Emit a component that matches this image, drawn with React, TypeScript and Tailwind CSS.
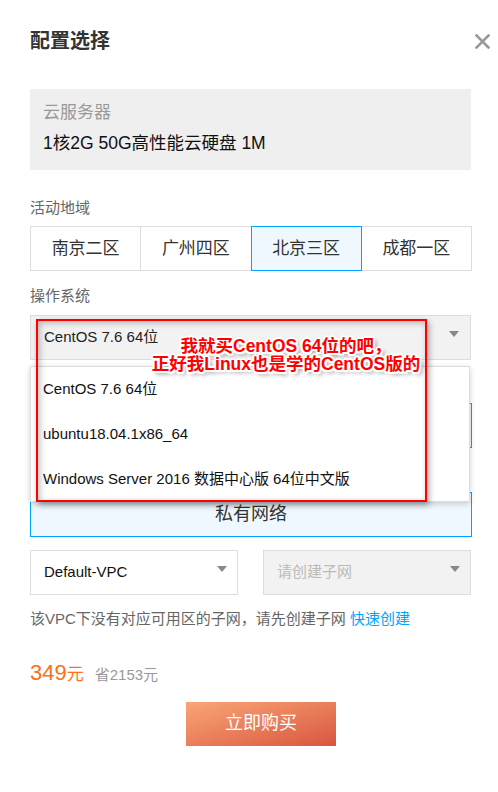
import React from "react";

const Arrow = () => (
  <svg width="10" height="6" viewBox="0 0 10 6" className="shrink-0">
    <path d="M0 0 L10 0 L5 6 Z" fill="#888" />
  </svg>
);

export default function App() {
  const tabs = ["南京二区", "广州四区", "北京三区", "成都一区"];
  return (
    <div
      className="relative w-[498px] h-[792px] bg-white overflow-hidden text-[#333]"
      style={{ fontFamily: '"Liberation Sans", "Noto Sans CJK SC", sans-serif' }}
    >
      {/* Header */}
      <div className="flex items-start justify-between pl-[30px] pr-[8px] pt-[31px]">
        <div className="text-[20px] leading-[20px] font-bold text-[#333]">配置选择</div>
        <svg width="15" height="15" viewBox="0 0 15 15" className="mt-[3px]">
          <path d="M1.5 1.5 L13.5 13.5 M13.5 1.5 L1.5 13.5" stroke="#999" strokeWidth="2.6" strokeLinecap="square" />
        </svg>
      </div>

      <div className="px-[30px] w-[471px] box-content">
        <div className="w-[441px]">
          {/* Server box */}
          <div className="mt-[38px] h-[81px] bg-[#efefef] pl-[13px] pt-[15px]">
            <div className="text-[17px] leading-[17px] text-[#999]">云服务器</div>
            <div className="mt-[14px] text-[17.5px] leading-[17px] text-[#111]">1核2G 50G高性能云硬盘 1M</div>
          </div>

          {/* Region */}
          <div className="mt-[30px] text-[15px] leading-[15px] text-[#666]">活动地域</div>
          <div className="mt-[11px] flex h-[45px] w-[442px]">
            {tabs.map((t, i) => (
              <div
                key={t}
                className={
                  i === 2
                    ? "relative z-10 flex-1 -ml-px flex items-center justify-center border border-[#00a4ff] bg-[#f0f8ff] text-[17px] text-[#333]"
                    : i === 0
                    ? "flex-1 flex items-center justify-center border border-[#ddd] text-[17px] text-[#333]"
                    : "flex-1 -ml-px flex items-center justify-center border border-[#ddd] text-[17px] text-[#333]"
                }
              >
                {t}
              </div>
            ))}
          </div>

          {/* OS */}
          <div className="mt-[17px] text-[15px] leading-[15px] text-[#666]">操作系统</div>
          <div className="mt-[12px] h-[45px] border border-[#ddd] bg-[#f2f2f2] flex items-center justify-between pl-[13px] pr-[11px]">
            <span className="text-[15px] text-[#222]">CentOS 7.6 64位</span>
            <div className="-mt-[8px]">
              <Arrow />
            </div>
          </div>

          {/* hidden network option */}
          <div className="mt-[43px] h-[45px] w-[442px] border border-[#00a4ff] bg-[#f0f8ff]" />
          <div className="mt-[44px] h-[45px] w-[442px] border border-[#00a4ff] bg-[#f0f8ff] flex items-center justify-center text-[18px] text-[#333]">
            私有网络
          </div>

          {/* VPC */}
          <div className="mt-[13px] flex justify-between">
            <div className="w-[208px] h-[45px] border border-[#ddd] bg-white flex items-center justify-between pl-[13px] pr-[10px]">
              <span className="text-[15px] text-[#111]">Default-VPC</span>
              <div className="-mt-[8px]">
                <Arrow />
              </div>
            </div>
            <div className="w-[208px] h-[45px] border border-[#ddd] bg-[#f2f2f2] flex items-center justify-between pl-[13px] pr-[10px]">
              <span className="text-[15px] text-[#bbb]">请创建子网</span>
              <div className="-mt-[8px]">
                <Arrow />
              </div>
            </div>
          </div>

          <div className="mt-[16px] text-[15px] leading-[16px] text-[#666] whitespace-nowrap">
            该VPC下没有对应可用区的子网，请先创建子网 <span className="text-[#00a4ff]">快速创建</span>
          </div>

          {/* Price */}
          <div className="mt-[34px] flex items-baseline">
            <span className="text-[22px] leading-[24px] text-[#ff6f1a]">349</span>
            <span className="text-[17px] text-[#ff6f1a]">元</span>
            <span className="ml-[11px] text-[15px] text-[#999]">省2153元</span>
          </div>

          <div className="mt-[14px] flex">
            <div className="ml-[156px] w-[150px] h-[44px] bg-linear-to-br from-[#f9a676] to-[#d8543f] flex items-center justify-center text-white text-[18px]">
              立即购买
            </div>
          </div>
        </div>
      </div>

      {/* Dropdown overlay */}
      <div className="absolute left-[30px] top-[366px] w-[440px] h-[136px] bg-white border border-[#ddd] shadow-[0_2px_6px_rgba(0,0,0,0.18)] z-20">
        {["CentOS 7.6 64位", "ubuntu18.04.1x86_64", "Windows Server 2016 数据中心版 64位中文版"].map((o) => (
          <div key={o} className="h-[45px] flex items-center pl-[12px] text-[15px] text-[#111] whitespace-nowrap">
            {o}
          </div>
        ))}
      </div>

      {/* Red annotation rectangle */}
      <div className="absolute left-[36px] top-[319px] w-[391px] h-[183px] border-2 border-[#f00] z-30 shadow-[2px_3px_6px_rgba(0,0,0,0.35),inset_2px_2px_6px_rgba(0,0,0,0.25)]" />

      {/* Annotation text */}
      <div
        className="absolute left-[130px] top-[337px] w-[312px] text-center z-40 font-bold text-[17.5px] leading-[18px] text-[#f00] whitespace-nowrap [text-shadow:2px_0_0_#fff,-2px_0_0_#fff,0_2px_0_#fff,0_-2px_0_#fff,1.5px_1.5px_0_#fff,-1.5px_-1.5px_0_#fff,1.5px_-1.5px_0_#fff,-1.5px_1.5px_0_#fff,3px_3px_4px_rgba(0,0,0,0.45)]"
      >
        我就买CentOS 64位的吧，
        <br />
        正好我Linux也是学的CentOS版的
      </div>
    </div>
  );
}
